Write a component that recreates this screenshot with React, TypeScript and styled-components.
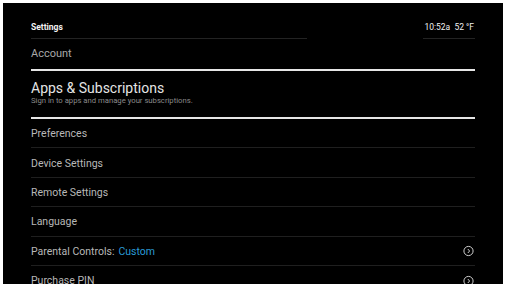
import React from 'react';
import styled, { createGlobalStyle } from 'styled-components';

const Global = createGlobalStyle`
    html, body {
        margin: 0;
        padding: 0;
        background: #fff;
    }
    body {
        font-family: Roboto, "Liberation Sans", sans-serif;
    }
`;

const Screen = styled.div`
    margin: 3px 0 0 3px;
    width: 500px;
    height: 281px;
    background: #000;
    overflow: hidden;
    padding: 0 28px;
    box-sizing: border-box;
`;

const Header = styled.div`
    display: flex;
    justify-content: space-between;
    height: 36px;
`;

const HeaderBlock = styled.div<{ width: number; end?: boolean }>`
    width: ${(p) => p.width}px;
    display: flex;
    align-items: flex-end;
    justify-content: ${(p) => (p.end ? 'flex-end' : 'flex-start')};
    border-bottom: 1px solid #232323;
    box-sizing: border-box;
    padding-bottom: 6px;
    color: #f2f2f2;
    font-size: 8.5px;
    font-weight: bold;
`;

const Clock = styled.span`
    font-weight: normal;
    font-size: 8.5px;
    color: #f0f0f0;
    white-space: pre;
    padding-right: 1px;
`;

const Row = styled.div`
    display: flex;
    align-items: center;
    justify-content: space-between;
    height: 29.4px;
    box-sizing: border-box;
    border-bottom: 1px solid #1f1f1f;
    color: #b8b8b8;
    font-size: 10.5px;
    padding-top: 1px;
`;

const AccountRow = styled(Row)`
    height: 31.5px;
    padding-top: 0;
    border-bottom: 2px solid #e6e6e6;
    color: #a8a8a8;
    font-size: 11px;
`;

const Featured = styled.div`
    height: 48.5px;
    border-bottom: 2px solid #e6e6e6;
    box-sizing: border-box;
    display: flex;
    flex-direction: column;
    padding-top: 9px;
`;

const FeaturedTitle = styled.div`
    color: #e4e4e4;
    font-size: 14px;
    line-height: 16px;
`;

const FeaturedSub = styled.div`
    color: #8a8a8a;
    font-size: 7.7px;
    line-height: 10px;
`;

const Value = styled.span`
    color: #2a9ad6;
    margin-left: 4px;
`;

const ChevronCircle = () => (
    <svg width="12" height="12" viewBox="0 0 12 12">
        <circle cx="5.5" cy="6" r="4.6" fill="none" stroke="#cfcfcf" strokeWidth="1" />
        <path d="M4.8 4 L6.6 6 L4.8 8" fill="none" stroke="#cfcfcf" strokeWidth="1" />
    </svg>
);

const items: { label: string; value?: string; arrow?: boolean }[] = [
    { label: 'Preferences' },
    { label: 'Device Settings' },
    { label: 'Remote Settings' },
    { label: 'Language' },
    { label: 'Parental Controls:', value: 'Custom', arrow: true },
    { label: 'Purchase PIN', arrow: true },
];

const App: React.FC = () => {
    return (
        <>
            <Global />
            <Screen>
                <Header>
                    <HeaderBlock width={276}>Settings</HeaderBlock>
                    <HeaderBlock width={52} end>
                        <Clock>{'10:52a  52 °F'}</Clock>
                    </HeaderBlock>
                </Header>
                <AccountRow>Account</AccountRow>
                <Featured>
                    <FeaturedTitle>Apps &amp; Subscriptions</FeaturedTitle>
                    <FeaturedSub>Sign in to apps and manage your subscriptions.</FeaturedSub>
                </Featured>
                {items.map((item) => (
                    <Row key={item.label}>
                        <span>
                            {item.label}
                            {item.value && <Value>{item.value}</Value>}
                        </span>
                        {item.arrow && <ChevronCircle />}
                    </Row>
                ))}
            </Screen>
        </>
    );
};

export default App;
